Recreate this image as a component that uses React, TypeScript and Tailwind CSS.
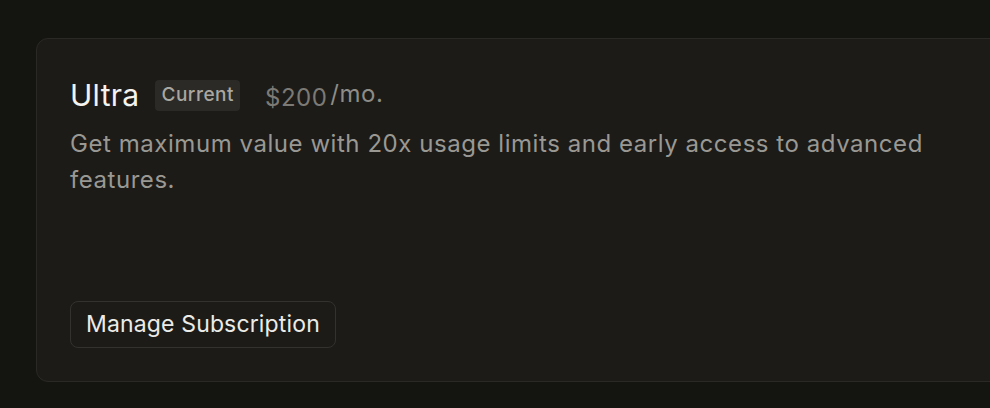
import React from "react";

const PlanCard: React.FC = () => (
  <section className="ml-[36px] mt-[38px] w-[1000px] h-[344px] shrink-0 rounded-[12px] border border-[#2a2925] bg-[#1c1b18] pl-[33px] pr-8 pt-[40px] pb-[33px] flex flex-col">
    <div className="flex items-center h-[32px]">
      <h2 className="text-[30px] leading-none text-[#f4f3ef] font-normal tracking-[0.3px]">
        Ultra
      </h2>
      <span className="ml-[16px] h-[31px] px-[6px] flex items-center rounded-[4px] bg-[#2b2a27] text-[19px] tracking-[0.5px] text-[#a9a7a1] font-medium">
        Current
      </span>
      <div className="ml-[25px] flex items-baseline">
        <span className="text-[24px] tracking-[0.5px] text-[#7c7a75] relative top-[3px]">$200</span>
        <span className="ml-[3px] text-[24px] tracking-[0.5px] text-[#8e8c87] relative -top-[1px]">/mo.</span>
      </div>
    </div>
    <p className="mt-[15px] text-[24px] leading-[36px] tracking-[0.55px] text-[#9a9893] max-w-[880px]">
      Get maximum value with 20x usage limits and early access to advanced features.
    </p>
    <div className="mt-auto">
      <button className="h-[47px] px-[15px] rounded-[8px] border border-[#33322e] bg-[#1c1b18] text-[23px] tracking-[0.15px] text-[#ecebe6]">
        Manage Subscription
      </button>
    </div>
  </section>
);

const App: React.FC = () => {
  return (
    <main
      className="w-[990px] h-[408px] overflow-hidden bg-[#141410] flex"
      style={{ fontFamily: "Inter, 'Noto Sans', sans-serif" }}
    >
      <PlanCard />
    </main>
  );
};

export default App;
